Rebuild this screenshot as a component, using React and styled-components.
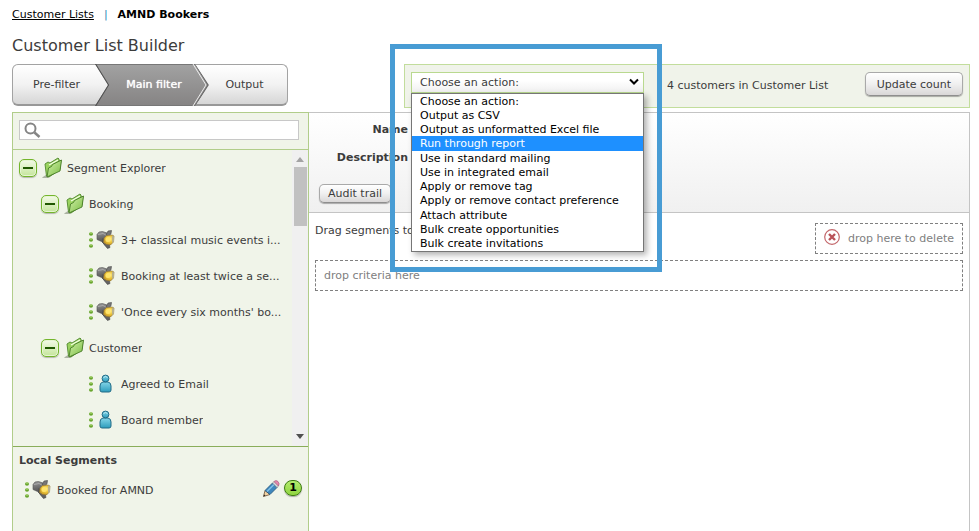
import React from "react";
import styled, { createGlobalStyle, css } from "styled-components";

const GlobalStyle = createGlobalStyle`
  *, *::before, *::after { box-sizing: border-box; }
  body {
    margin: 0;
    background: #fff;
    color: #3c3c3c;
    font: 11px/16px Verdana, "DejaVu Sans", sans-serif;
  }
  button, input, select { font: inherit; color: inherit; }
  ul { list-style: none; margin: 0; padding: 0; }
`;

const Page = styled.div`
  display: flex;
  flex-direction: column;
  min-height: 100vh;
  padding: 7px 9px 0 12px;
`;

const Breadcrumb = styled.nav`
  display: flex;
  gap: 10px;
  color: #000;
  a { color: #000; }
  span { color: #2f86b5; }
`;

const Title = styled.h1`
  margin: 12px 0 7px;
  font-size: 16px;
  line-height: 22px;
  font-weight: 400;
`;

const Toolbar = styled.header`
  display: flex;
  align-items: flex-start;
  justify-content: space-between;
  height: 48px;
`;

const Wizard = styled.nav`
  display: flex;
  width: 276px;
  height: 42px;
  border: 1px solid #a3a3a3;
  border-bottom: 2px solid #989898;
  border-radius: 6px;
  background: linear-gradient(#fff, #f2f2f2 50%, #d6d6d6);
`;

const Step = styled.button`
  flex: ${(p) => (p.$last ? "1" : "0 0 82px")};
  padding: ${(p) => (p.$last ? "0 7px 0 0" : "0 0 0 5px")};
  border: 0;
  background: none;
  ${(p) =>
    p.$current &&
    css`
      position: relative;
      flex: 0 0 114px;
      margin: -1px 0 -2px;
      padding: 0 0 1px 4px;
      color: #fff;
      text-shadow: 0 0 1px #fff;
      background: linear-gradient(#a2a2a2, #858383);
      clip-path: polygon(0 0, 100px 0, 100% 50%, 100px 100%, 0 100%, 13px 50%);
    `}
`;

const StepEdges = styled.svg`
  position: absolute;
  inset: 0;
  width: 100%;
  height: 100%;
`;

const ActionBar = styled.div`
  display: flex;
  align-items: center;
  width: 566px;
  height: 44px;
  padding: 0 6px;
  border: 1px solid #c2dd9c;
  background: #f0f3ea;
`;

const ActionPicker = styled.div`
  position: relative;
  width: 233px;
  height: 21px;
  margin-bottom: 8px;
  > svg { position: absolute; right: 5px; top: 6px; }
`;

const ActionSelect = styled.select`
  display: block;
  width: 100%;
  height: 21px;
  padding: 2px 8px 0;
  appearance: none;
  border: 1px solid #b9d98f;
  border-radius: 0;
  background: linear-gradient(#fff 40%, #f0f0f0);
`;

const Menu = styled.ul`
  position: absolute;
  z-index: 2;
  top: 21px;
  left: 0;
  display: flex;
  flex-direction: column;
  width: 100%;
  height: 159px;
  color: #000;
  border: 1px solid #767676;
  background: #fff;
  box-shadow: 3px 3px 6px rgba(0, 0, 0, 0.3);
`;

const MenuItem = styled.li`
  display: flex;
  flex: 1;
  align-items: center;
  padding: 1px 0 0 8px;
  line-height: 13px;
  white-space: nowrap;
  color: ${(p) => (p.$active ? "#fff" : "#000")};
  background: ${(p) => (p.$active ? "#1e90ff" : "none")};
`;

const Highlight = styled.div`
  position: absolute;
  z-index: 3;
  top: -28px;
  left: -21px;
  right: -18px;
  height: 228px;
  border: 5px solid #489cd4;
  pointer-events: none;
`;

const Count = styled.output`
  margin-left: 23px;
`;

const PillButton = styled.button`
  height: ${(p) => (p.$large ? 24 : 19)}px;
  padding: ${(p) => (p.$large ? "1px 11px 0" : "0 8px")};
  line-height: 14px;
  white-space: nowrap;
  border: 1px solid #a9a9a9;
  border-bottom-color: #8e8e8e;
  border-radius: 5px;
  background: linear-gradient(#fff, #f0f0f0 50%, #d9d7d7);
  box-shadow: 0 1px 1px rgba(0, 0, 0, 0.3);
`;

const UpdateSlot = styled.div`
  margin-left: auto;
  margin-bottom: 4px;
`;

const Body = styled.div`
  display: flex;
  flex: 1;
`;

const Sidebar = styled.aside`
  flex: 0 0 297px;
  min-width: 0;
  border: 1px solid #b1cd8a;
  border-bottom: 0;
  background: #f0f4e9;
`;

const SearchArea = styled.div`
  padding: 7px 9px 9px 6px;
  border-bottom: 1px solid #b1cd8a;
`;

const SearchBox = styled.label`
  display: flex;
  align-items: center;
  height: 20px;
  padding-left: 4px;
  border: 1px solid #c8c8c8;
  background: #fff;
  input {
    flex: 1;
    min-width: 0;
    height: 18px;
    border: 0;
    outline: 0;
    background: none;
  }
`;

const TreePane = styled.div`
  display: flex;
  height: 297px;
  border-bottom: 1px solid #8aad5a;
`;

const Tree = styled.ul`
  flex: 1;
  min-width: 0;
`;

const indents = { 0: 6, 1: 28, 2: 75 };

const TreeRow = styled.li`
  display: flex;
  align-items: center;
  height: 36px;
  padding-left: ${(p) => indents[p.$level]}px;
  padding-right: 8px;
`;

const TreeLabel = styled.span`
  min-width: 0;
  margin-left: ${(p) => (p.$leaf ? 6 : 4)}px;
  padding-top: 1px;
  overflow: hidden;
  text-overflow: ellipsis;
  white-space: nowrap;
`;

const Toggle = styled.button`
  flex: none;
  display: grid;
  place-items: center;
  width: 18px;
  height: 18px;
  margin-right: 5px;
  padding: 0;
  border: 1px solid #74b52c;
  border-radius: 5px;
  background: linear-gradient(#f3fae8, #c4e59b);
  box-shadow: inset 0 0 0 1px #e6f5d2, 0 1px 1px rgba(0, 0, 0, 0.25);
  &::before {
    content: "";
    width: 10px;
    height: 2px;
    background: #205800;
  }
`;

const Scrollbar = styled.div`
  flex: none;
  display: flex;
  flex-direction: column;
  align-items: center;
  width: 16px;
  padding: 7px 0;
  background: #f0f0f0;
`;

const Thumb = styled.div`
  width: 13px;
  height: 59px;
  margin: 5px 0 auto;
  background: #c1c1c1;
`;

const LocalTitle = styled.h2`
  margin: 6px 6px 4px;
  font-size: 11px;
  line-height: 16px;
`;

const LocalRow = styled.div`
  display: flex;
  align-items: center;
  height: 34px;
  padding: 0 6px 0 11px;
`;

const IconButton = styled.button`
  display: flex;
  margin: 0 4px 3px auto;
  padding: 0;
  border: 0;
  background: none;
`;

const Badge = styled.span`
  width: 18px;
  height: 16px;
  margin-bottom: 4px;
  border: 1px solid #3e7d12;
  border-radius: 8px;
  background: linear-gradient(#b4ec6e, #8fd43f);
  box-shadow: 0 1px 1px rgba(0, 0, 0, 0.3);
  color: #000;
  font-weight: 700;
  line-height: 14px;
  text-align: center;
`;

const Main = styled.main`
  flex: 1;
  min-width: 0;
  border: 1px solid #c4c4c4;
  border-width: 1px 1px 0 0;
`;

const Details = styled.section`
  height: 100px;
  padding: 9px 10px 0;
  border-bottom: 1px solid #c4c4c4;
  background: linear-gradient(#fff, #f0f0f0);
`;

const Fields = styled.div`
  display: grid;
  gap: 12px;
  margin-bottom: 18px;
`;

const FieldName = styled.div`
  width: 89px;
  font-weight: 700;
  text-align: right;
`;

const Criteria = styled.section`
  padding: 10px 6px;
`;

const CriteriaHead = styled.div`
  display: flex;
  align-items: flex-start;
  justify-content: space-between;
  margin-bottom: 6px;
`;

const Hint = styled.p`
  margin: 0;
`;

const DropZone = styled.div`
  display: flex;
  align-items: center;
  gap: 8px;
  height: 31px;
  padding: 1px 8px 0;
  border: 1px dashed #808080;
  color: #808080;
`;

const FixedSvg = styled.svg`
  display: block;
  flex: none;
`;

const DotsSvg = styled(FixedSvg)`
  margin-right: 2px;
`;

function FolderIcon() {
  return (
    <FixedSvg width="21" height="22" viewBox="0 0 21 22">
      <defs>
        <linearGradient id="folder" x1="0" y1="0" x2="1" y2="1">
          <stop offset="0" stopColor="#d4f3ac" />
          <stop offset="1" stopColor="#79bb42" />
        </linearGradient>
      </defs>
      <path d="M0 20.500 4 18l4 1.500-2 1.500H1z" fill="#8f9785" opacity=".7" />
      <path d="M4.500 19 3 7l3-2 2 1 8-5 1 1v2l2-.5-1 9L7 20z" fill="#9ad35f" stroke="#5b9138" />
      <path d="m7 8 9-5" fill="none" stroke="#f4ffe6" strokeWidth="1.200" />
      <path d="m5 20 1.500-9 3-1.500 1-2L19.500 3 18 14z" fill="url(#folder)" stroke="#477c27" strokeWidth=".9" strokeLinejoin="round" />
    </FixedSvg>
  );
}

function DragDots() {
  return (
    <DotsSvg width="6" height="18" viewBox="0 0 6 18">
      {[3, 9, 15].map((y) => (
        <g key={y}>
          <ellipse cx="3" cy={y} rx="2" ry="1.800" fill="#68a52e" />
          <ellipse cx="3" cy={y - 1} rx="1.300" ry=".7" fill="#a9d670" />
        </g>
      ))}
    </DotsSvg>
  );
}

function SpotlightIcon() {
  return (
    <FixedSvg width="19" height="20" viewBox="0 0 19 20">
      <defs>
        <linearGradient id="barrel" x1=".3" y1="0" x2=".5" y2="1">
          <stop offset="0" stopColor="#969696" />
          <stop offset=".5" stopColor="#686868" />
          <stop offset="1" stopColor="#484848" />
        </linearGradient>
        <radialGradient id="lamp" cx=".6" cy=".4" r=".65">
          <stop offset="0" stopColor="#fff29a" />
          <stop offset=".5" stopColor="#edc53a" />
          <stop offset="1" stopColor="#c09323" />
        </radialGradient>
      </defs>
      <path d="M1 4.500 3 2l3.500-.5 6 2 1 4-5 7-3-3-4.500-2z" fill="url(#barrel)" stroke="#505050" strokeWidth=".6" />
      <path d="m2 4.500 5-1 4 2" fill="none" stroke="#aaa" />
      <path d="m10 5 2-4 3.500-.5-.5 3-2 3z" fill="#777" stroke="#484848" strokeWidth=".6" />
      <path d="M7 8.500 6.500 12l2 3 3 3.500 2.500-1-.5-2 1-1-5-1.500z" fill="#626262" stroke="#444" strokeWidth=".6" />
      <path d="m8 8 2.500-2.500L16 5l2 1-.5 6-3 3-4-.5-3-2z" fill="url(#lamp)" stroke="#89713a" strokeWidth=".6" />
      <path d="m16 5.500 2 1v5L16 13z" fill="#b7b08d" />
      <circle cx="12" cy="9.500" r="2.500" fill="#ffe46a" />
    </FixedSvg>
  );
}

function PersonIcon() {
  return (
    <FixedSvg width="19" height="20" viewBox="0 0 19 20">
      <defs>
        <linearGradient id="person" x1="0" y1="0" x2="0" y2="1">
          <stop offset="0" stopColor="#83d5e8" />
          <stop offset="1" stopColor="#2d9cbc" />
        </linearGradient>
      </defs>
      <path d="M4 12q0-3.500 3-4h5q3 .5 3 4v4q0 2-2 2H6q-2 0-2-2z" fill="url(#person)" stroke="#226b86" />
      <circle cx="9.500" cy="4.500" r="3.400" fill="url(#person)" stroke="#226b86" />
      <path d="M7.500 3.500q2-2 4 0" fill="none" stroke="#b9ebf4" />
    </FixedSvg>
  );
}

function PencilIcon() {
  return (
    <FixedSvg width="18" height="18" viewBox="0 0 18 18">
      <path d="m1.500 16.500 1.500-6 5 4z" fill="#f1d2a3" stroke="#6a5039" strokeWidth=".8" />
      <path d="m3 10.500 7.500-7.500 4.500 4.500-7 7z" fill="#3f87bd" stroke="#245477" strokeWidth=".8" />
      <path d="m5 11.500 7-7" stroke="#82c2e8" strokeWidth="1.500" />
      <path d="m10.500 3 1.500-1.500 4.500 4.500L15 7.500z" fill="#d6dce0" stroke="#75797b" strokeWidth=".6" />
      <path d="M12 1.500q2-2 4 0t.5 4.500z" fill="#e487ac" stroke="#a25b79" strokeWidth=".6" />
      <path d="m1.500 16.500.5-2 1.500 1z" fill="#222" />
    </FixedSvg>
  );
}

function SearchIcon() {
  return (
    <FixedSvg width="17" height="16" viewBox="0 0 17 16" fill="none" stroke="#858585">
      <circle cx="6.500" cy="6.500" r="5" strokeWidth="2" />
      <path d="m10.500 10.500 5 4.500" strokeWidth="2.500" />
    </FixedSvg>
  );
}

function DeleteIcon() {
  return (
    <FixedSvg width="16" height="20" viewBox="0 0 16 20" fill="none" stroke="#c3676b">
      <circle cx="8" cy="8" r="7.300" strokeWidth="1.200" />
      <path d="m5 5 6 6m0-6-6 6" stroke="#b95359" strokeWidth="2.400" />
    </FixedSvg>
  );
}

function Arrow({ down }) {
  return (
    <FixedSvg width="8" height="5" viewBox="0 0 8 5">
      <path d={down ? "M0 0h8L4 5z" : "M0 5h8L4 0z"} fill={down ? "#505050" : "#a3a3a3"} />
    </FixedSvg>
  );
}

const actions = [
  "Choose an action:",
  "Output as CSV",
  "Output as unformatted Excel file",
  "Run through report",
  "Use in standard mailing",
  "Use in integrated email",
  "Apply or remove tag",
  "Apply or remove contact preference",
  "Attach attribute",
  "Bulk create opportunities",
  "Bulk create invitations",
];

const segments = [
  { level: 0, label: "Segment Explorer" },
  { level: 1, label: "Booking" },
  { level: 2, label: "3+ classical music events i...", icon: SpotlightIcon },
  { level: 2, label: "Booking at least twice a se...", icon: SpotlightIcon },
  { level: 2, label: "'Once every six months' bo...", icon: SpotlightIcon },
  { level: 1, label: "Customer" },
  { level: 2, label: "Agreed to Email", icon: PersonIcon },
  { level: 2, label: "Board member", icon: PersonIcon },
];

function Segment({ level, label, icon: Icon }) {
  return (
    <TreeRow $level={level}>
      {Icon ? (
        <>
          <DragDots />
          <Icon />
        </>
      ) : (
        <>
          <Toggle aria-label={`Collapse ${label}`} />
          <FolderIcon />
        </>
      )}
      <TreeLabel $leaf={Boolean(Icon)}>{label}</TreeLabel>
    </TreeRow>
  );
}

export default function App() {
  return (
    <Page>
      <GlobalStyle />
      <Breadcrumb>
        <a href="#lists">Customer Lists</a>
        <span>|</span>
        <b>AMND Bookers</b>
      </Breadcrumb>
      <Title>Customer List Builder</Title>
      <Toolbar>
        <Wizard>
          <Step>Pre-filter</Step>
          <Step $current aria-current="step">
            <StepEdges viewBox="0 0 114 42" fill="none">
              <path d="M0 .500H100M0 41.500H100" stroke="#777" />
              <path d="M0 0 13 21 0 42" stroke="#505050" strokeWidth="2" />
              <path d="M98 0 111 21 98 42" stroke="#eee" />
              <path d="M100 0 113 21 100 42" stroke="#666" />
            </StepEdges>
            Main filter
          </Step>
          <Step $last>Output</Step>
        </Wizard>
        <ActionBar>
          <ActionPicker>
            <ActionSelect aria-label="Action">
              {actions.map((a) => (
                <option key={a}>{a}</option>
              ))}
            </ActionSelect>
            <svg width="10" height="8" viewBox="0 0 10 8" fill="none" stroke="#000" strokeWidth="2">
              <path d="m1 1.500 4 4 4-4" />
            </svg>
            <Menu role="listbox" aria-label="Actions">
              {actions.map((a) => (
                <MenuItem
                  key={a}
                  role="option"
                  aria-selected={a === "Run through report"}
                  $active={a === "Run through report"}
                >
                  {a}
                </MenuItem>
              ))}
            </Menu>
            <Highlight />
          </ActionPicker>
          <Count>4 customers in Customer List</Count>
          <UpdateSlot>
            <PillButton $large>Update count</PillButton>
          </UpdateSlot>
        </ActionBar>
      </Toolbar>
      <Body>
        <Sidebar>
          <SearchArea>
            <SearchBox>
              <SearchIcon />
              <input type="text" aria-label="Search segments" />
            </SearchBox>
          </SearchArea>
          <TreePane>
            <Tree>
              {segments.map((s) => (
                <Segment key={s.label} {...s} />
              ))}
            </Tree>
            <Scrollbar>
              <Arrow />
              <Thumb />
              <Arrow down />
            </Scrollbar>
          </TreePane>
          <LocalTitle>Local Segments</LocalTitle>
          <LocalRow>
            <DragDots />
            <SpotlightIcon />
            <TreeLabel $leaf>Booked for AMND</TreeLabel>
            <IconButton aria-label="Edit Booked for AMND">
              <PencilIcon />
            </IconButton>
            <Badge>1</Badge>
          </LocalRow>
        </Sidebar>
        <Main>
          <Details>
            <Fields>
              <FieldName>Name</FieldName>
              <FieldName>Description</FieldName>
            </Fields>
            <PillButton>Audit trail</PillButton>
          </Details>
          <Criteria>
            <CriteriaHead>
              <Hint>Drag segments to</Hint>
              <DropZone>
                <DeleteIcon />
                drop here to delete
              </DropZone>
            </CriteriaHead>
            <DropZone>drop criteria here</DropZone>
          </Criteria>
        </Main>
      </Body>
    </Page>
  );
}
